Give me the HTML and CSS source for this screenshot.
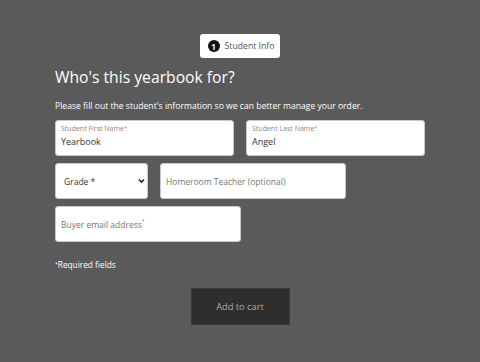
FILE: index.html
```html
<!DOCTYPE html>
<html lang="en">
<head>
    <meta charset="UTF-8">
    <meta name="viewport" content="width=device-width, initial-scale=1.0">
    <title>Student Info</title>
    <link rel="stylesheet" href="styles.css">
</head>
<body>
    <div class="page">
        <div class="steps">
            <div class="step">
                <span class="step-num">1</span>
                <span class="step-label">Student Info</span>
            </div>
        </div>

        <h1>Who's this yearbook for?</h1>
        <p class="intro">Please fill out the student's information so we can better manage your order.</p>

        <form class="student-form">
            <div class="row">
                <div class="field field-name">
                    <label for="first">Student First Name<sup>*</sup></label>
                    <input type="text" id="first" value="Yearbook">
                </div>
                <div class="field field-name">
                    <label for="last">Student Last Name<sup>*</sup></label>
                    <input type="text" id="last" value="Angel">
                </div>
            </div>

            <div class="row">
                <div class="field field-select">
                    <span>Grade *</span>
                    <svg width="7" height="6" viewBox="0 0 7 6"><path d="M1 1.5 L3.5 4 L6 1.5" fill="none" stroke="#222" stroke-width="1.6"/></svg>
                </div>
                <div class="field field-plain">
                    <span class="placeholder">Homeroom Teacher (optional)</span>
                </div>
            </div>

            <div class="row">
                <div class="field field-plain">
                    <span class="placeholder">Buyer email address<sup>*</sup></span>
                </div>
            </div>

            <p class="required"><sup>*</sup>Required fields</p>

            <div class="actions">
                <button type="button" class="cart-button">Add to cart</button>
            </div>
        </form>
    </div>
</body>
</html>
```

FILE: styles.css
```css
/* Student info step */
body {
    margin: 0;
    padding: 0;
    background-color: #5a5a5a;
    font-family: 'Open Sans', 'Noto Sans', sans-serif;
    color: #fff;
}
.page {
    padding: 34px 55px 0 55px;
}
.steps {
    display: flex;
    justify-content: center;
}
.step {
    display: flex;
    align-items: center;
    gap: 5px;
    background-color: #fff;
    border-radius: 3px;
    height: 24px;
    padding: 0 6px 0 8px;
    color: #555;
    font-size: 8.7px;
}
.step-num {
    width: 12px;
    height: 12px;
    border-radius: 50%;
    background-color: #111;
    color: #fff;
    font-size: 8px;
    font-weight: bold;
    display: flex;
    align-items: center;
    justify-content: center;
}
h1 {
    margin: 5px 0 0 0;
    font-size: 15.7px;
    font-weight: normal;
    line-height: 28px;
}
.intro {
    margin: 9px 0 0 0;
    font-size: 8.6px;
    line-height: 12px;
}
.student-form {
    margin-top: 8px;
}
.row {
    display: flex;
    gap: 12px;
    margin-bottom: 7px;
}
.field {
    box-sizing: border-box;
    height: 36px;
    background-color: #fff;
    border: 1px solid #c8c8c8;
    border-radius: 3px;
    color: #333;
}
.field-name {
    width: 180px;
    padding: 3px 0 0 5px;
}
.field-name label {
    display: block;
    font-size: 7px;
    color: #888;
    line-height: 10px;
}
.field-name input {
    display: block;
    border: none;
    padding: 0;
    margin-top: 2px;
    height: 12px;
    line-height: 12px;
    font-family: inherit;
    font-size: 9px;
    color: #333;
    width: 160px;
    outline: none;
}
sup {
    font-size: 5px;
    vertical-align: top;
    position: relative;
    top: -1px;
}
.field-select {
    width: 93px;
    display: flex;
    align-items: center;
    justify-content: space-between;
    padding: 0 2px 0 8px;
    font-size: 8.5px;
}
.field-plain {
    width: 186px;
    display: flex;
    align-items: center;
    padding-left: 5px;
}
.placeholder {
    font-size: 8.5px;
    color: #777;
}
.required {
    margin: 17px 0 0 0;
    font-size: 8.3px;
    line-height: 12px;
}
.actions {
    display: flex;
    justify-content: center;
    margin-top: 17px;
}
.cart-button {
    width: 99px;
    height: 37px;
    background-color: #2e2e2e;
    border: 1px solid #3a3a3a;
    color: #acacac;
    font-family: inherit;
    font-size: 9.3px;
}
```
